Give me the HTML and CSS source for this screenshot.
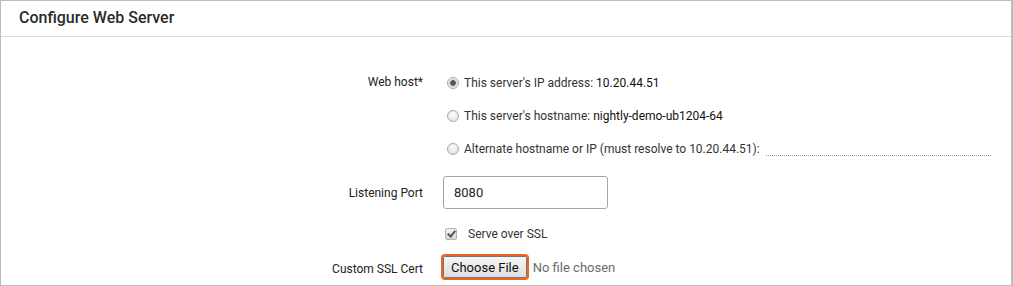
FILE: index.html
```html
<!DOCTYPE html>
<html lang="en">

<head>
    <meta charset="UTF-8" />
    <title>Configure Web Server</title>
    <link rel="stylesheet" href="styles.css">
</head>

<body>
    <div class="panel">
        <div class="panel-head">Configure Web Server</div>

        <div class="panel-body">
            <div class="form-row">
                <div class="form-label">Web host*</div>
                <div class="form-field options">
                    <label class="option">
                        <input type="radio" name="host" checked>
                        <span>This server's IP address: <b>10.20.44.51</b></span>
                    </label>
                    <label class="option">
                        <input type="radio" name="host">
                        <span>This server's hostname: <b>nightly-demo-ub1204-64</b></span>
                    </label>
                    <label class="option">
                        <input type="radio" name="host">
                        <span>Alternate hostname or IP (must resolve to 10.20.44.51):</span>
                        <span class="dotted"></span>
                    </label>
                </div>
            </div>

            <div class="form-row port-row">
                <div class="form-label">Listening Port</div>
                <div class="form-field">
                    <input class="text-input" type="text" value="8080">
                </div>
            </div>

            <div class="form-row ssl-row">
                <div class="form-label"></div>
                <div class="form-field">
                    <label class="check">
                        <input type="checkbox" checked>
                        <span>Serve over SSL</span>
                    </label>
                </div>
            </div>

            <div class="form-row cert-row">
                <div class="form-label">Custom SSL Cert</div>
                <div class="form-field file-field">
                    <button class="file-btn" type="button">Choose File</button>
                    <span class="file-name">No file chosen</span>
                </div>
            </div>
        </div>
    </div>
</body>

</html>
```

FILE: styles.css
```css
:root {
    --border: #bdbdbd;
    --divider: #dcdcdc;
    --text: #333;
    --muted: #6b6b6b;
    --focus: #e8661f;
}

body {
    margin: 0;
    font-family: Roboto, "Liberation Sans", sans-serif;
    font-size: 12px;
    color: var(--text);
    background: #fff;
}

.panel {
    width: 1010px;
    height: 284px;
    border: 1px solid var(--border);
    border-right-width: 2px;
    overflow: hidden;
}

.panel-head {
    height: 35px;
    line-height: 34px;
    padding-left: 18px;
    font-size: 16px;
    font-weight: 500;
    color: #2b2b2b;
    border-bottom: 1px solid var(--divider);
}

.panel-body {
    padding-top: 29px;
}

.form-row {
    display: grid;
    grid-template-columns: 422px 1fr;
    column-gap: 20px;
    align-items: center;
}

.form-label {
    text-align: right;
    color: #222;
}

.options {
    display: flex;
    flex-direction: column;
}

.form-row:first-child {
    align-items: start;
}

.form-row:first-child .form-label {
    line-height: 33px;
}

.option {
    display: flex;
    align-items: center;
    height: 33px;
    gap: 5px;
    padding-left: 4px;
    white-space: nowrap;
}

.option b {
    font-weight: 400;
    color: #111;
}

.option input {
    appearance: none;
    margin: 0;
    width: 12px;
    height: 12px;
    border-radius: 50%;
    border: 1px solid #a9a9a9;
    background: radial-gradient(circle at 50% 35%, #fdfdfd, #dcdcdc);
    box-sizing: border-box;
}

.option input:checked {
    background: radial-gradient(circle, #555 0 2.5px, #c9c9c9 3px, #f2f2f2 5px);
}

.dotted {
    width: 225px;
    margin-left: 1px;
    margin-top: 13px;
    border-bottom: 1px dotted #9a9a9a;
}

.port-row {
    margin-top: 11px;
}

.text-input {
    box-sizing: border-box;
    width: 165px;
    height: 33px;
    padding: 0 10px;
    border: 1px solid #a6a6a6;
    border-radius: 3px;
    font-family: inherit;
    font-size: 13px;
    color: #222;
}

.ssl-row {
    margin-top: 15px;
}

.check {
    display: flex;
    align-items: center;
    gap: 11px;
    padding-left: 2px;
    height: 20px;
}

.check input {
    appearance: none;
    margin: 0;
    width: 12px;
    height: 12px;
    border: 1px solid #b4b4b4;
    border-radius: 2px;
    box-sizing: border-box;
    background: linear-gradient(#f4f4f4, #d8d8d8);
    position: relative;
}

.check input:checked::after {
    content: "";
    position: absolute;
    left: 3px;
    top: 0px;
    width: 3px;
    height: 6px;
    border: solid #555;
    border-width: 0 2px 2px 0;
    transform: rotate(40deg);
}

.cert-row {
    margin-top: 12px;
}

.cert-row .form-label {
    padding-top: 3px;
}

.file-field {
    display: flex;
    align-items: center;
    gap: 6px;
}

.file-btn {
    height: 22px;
    padding: 0 7px;
    font-family: inherit;
    font-size: 13px;
    color: #111;
    background: linear-gradient(#f6f6f6, #dedede);
    border: 1px solid #777;
    border-radius: 2px;
    box-shadow: 0 0 0 2px var(--focus);
}

.file-name {
    font-size: 13px;
    color: var(--muted);
}
```
